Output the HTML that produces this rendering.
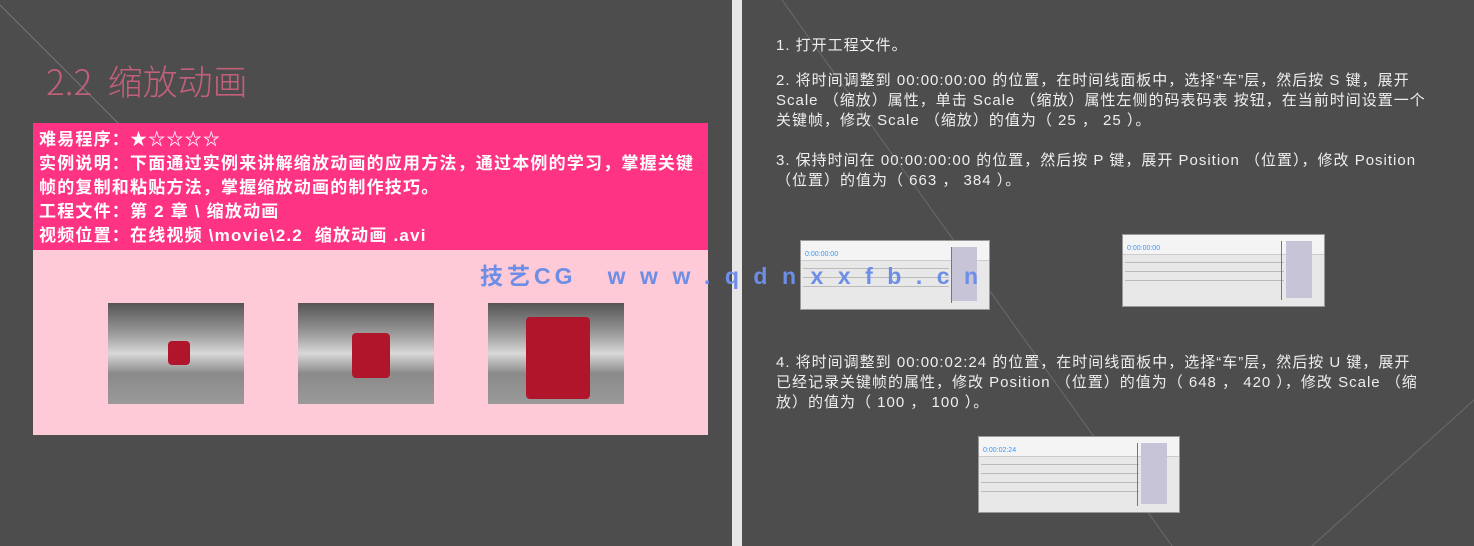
<!DOCTYPE html>
<html><head><meta charset="utf-8"><style>
*{margin:0;padding:0;box-sizing:border-box}
body{width:1474px;height:546px;background:#e6e6e6;position:relative;overflow:hidden;font-family:"Liberation Sans","Noto Sans CJK SC",sans-serif}
.slide{position:absolute;top:0;height:546px;background:#4d4d4d;overflow:hidden}
.ab{position:absolute}
.pk{left:33px;top:123px;width:675px;height:312px;background:#ffcad7}
.pk2{left:33px;top:123px;width:675px;height:127px;background:#ff3383;color:#fff;font-weight:bold;font-size:17px;line-height:24px;padding:5px 6px;letter-spacing:1.2px;white-space:nowrap;overflow:hidden}
.img{width:136px;height:101px;background:linear-gradient(180deg,#555 0%,#9a9a9a 30%,#d8d8d8 50%,#8a8a8a 70%,#9a9a9a 100%)}
.car{position:absolute;background:#b0152c;border-radius:4px}
.rt{color:#eee;font-size:15px;line-height:20px;position:absolute;left:776px;letter-spacing:1px;white-space:nowrap}
.ss{position:absolute;background:#e8e8e8;border:1px solid #999}
.ss .h{background:#f4f4f4;height:20px;border-bottom:1px solid #ccc}
.ss .tc{position:absolute;left:4px;top:10px;font-size:7px;color:#39f}
.ss .row{position:absolute;left:2px;right:40px;height:1px;background:#bbb}
.ss .t{position:absolute;right:12px;top:6px;bottom:8px;width:26px;background:#c8c4d8}
.ss .r{position:absolute;top:6px;bottom:6px;width:1px;background:#e05030}
</style></head><body>
<div class="slide" style="left:0;width:732px">
<svg class="ab" width="732" height="546" style="left:0;top:0"><line x1="0" y1="5" x2="120" y2="125" stroke="#777" stroke-width="1"/></svg>
<div class="ab" style="left:46px;top:55px;font-size:35px;color:#c2607a;font-family:'Noto Sans CJK SC',sans-serif;font-weight:300">2.2&nbsp; 缩放动画</div>
<div class="ab pk"></div>
<div class="ab pk2">难易程序：★☆☆☆☆<br>实例说明：下面通过实例来讲解缩放动画的应用方法，通过本例的学习，掌握关键<br>帧的复制和粘贴方法，掌握缩放动画的制作技巧。<br>工程文件：第 2 章 \ 缩放动画<br>视频位置：在线视频 \movie\2.2&nbsp; 缩放动画 .avi</div>
<div class="ab img" style="left:108px;top:303px"><div class="car" style="left:60px;top:38px;width:22px;height:24px"></div></div>
<div class="ab img" style="left:298px;top:303px"><div class="car" style="left:54px;top:30px;width:38px;height:45px"></div></div>
<div class="ab img" style="left:488px;top:303px"><div class="car" style="left:38px;top:14px;width:64px;height:82px"></div></div>
</div>
<div class="slide" style="left:742px;width:732px">
<svg class="ab" width="732" height="546" style="left:0;top:0"><line x1="40" y1="0" x2="430" y2="546" stroke="#6a6a6a"/><line x1="732" y1="400" x2="570" y2="546" stroke="#6a6a6a"/></svg>
</div>
<div class="rt" style="top:36px">1. 打开工程文件。</div>
<div class="rt" style="top:71px">2. 将时间调整到 00:00:00:00 的位置，在时间线面板中，选择“车”层，然后按 S 键，展开<br>Scale （缩放）属性，单击 Scale （缩放）属性左侧的码表码表 按钮，在当前时间设置一个<br>关键帧，修改 Scale （缩放）的值为（ 25 ， 25 ）。</div>
<div class="rt" style="top:151px">3. 保持时间在 00:00:00:00 的位置，然后按 P 键，展开 Position （位置），修改 Position<br>（位置）的值为（ 663 ， 384 ）。</div>
<div class="rt" style="top:353px">4. 将时间调整到 00:00:02:24 的位置，在时间线面板中，选择“车”层，然后按 U 键，展开<br>已经记录关键帧的属性，修改 Position （位置）的值为（ 648 ， 420 ），修改 Scale （缩<br>放）的值为（ 100 ， 100 ）。</div>
<div class="ss" style="left:800px;top:240px;width:190px;height:70px"><div class="h"></div><div class="tc">0:00:00:00</div><div class="row" style="top:27px"></div><div class="row" style="top:36px"></div><div class="row" style="top:45px"></div><div class="t"></div><div class="r" style="left:150px"></div></div>
<div class="ss" style="left:1122px;top:234px;width:203px;height:73px"><div class="h"></div><div class="tc">0:00:00:00</div><div class="row" style="top:27px"></div><div class="row" style="top:36px"></div><div class="row" style="top:45px"></div><div class="t"></div><div class="r" style="left:158px"></div></div>
<div class="ss" style="left:978px;top:436px;width:202px;height:77px"><div class="h"></div><div class="tc">0:00:02:24</div><div class="row" style="top:27px"></div><div class="row" style="top:36px"></div><div class="row" style="top:45px"></div><div class="row" style="top:54px"></div><div class="t"></div><div class="r" style="left:158px"></div></div>
<div class="ab" style="left:480px;top:257px;font-size:23px;font-weight:bold;color:#6d8ee6;letter-spacing:4px;white-space:nowrap">技艺CG&nbsp;&nbsp;&nbsp;<span style="letter-spacing:14.5px">www.qdnxxfb.cn</span></div>
</body></html>
